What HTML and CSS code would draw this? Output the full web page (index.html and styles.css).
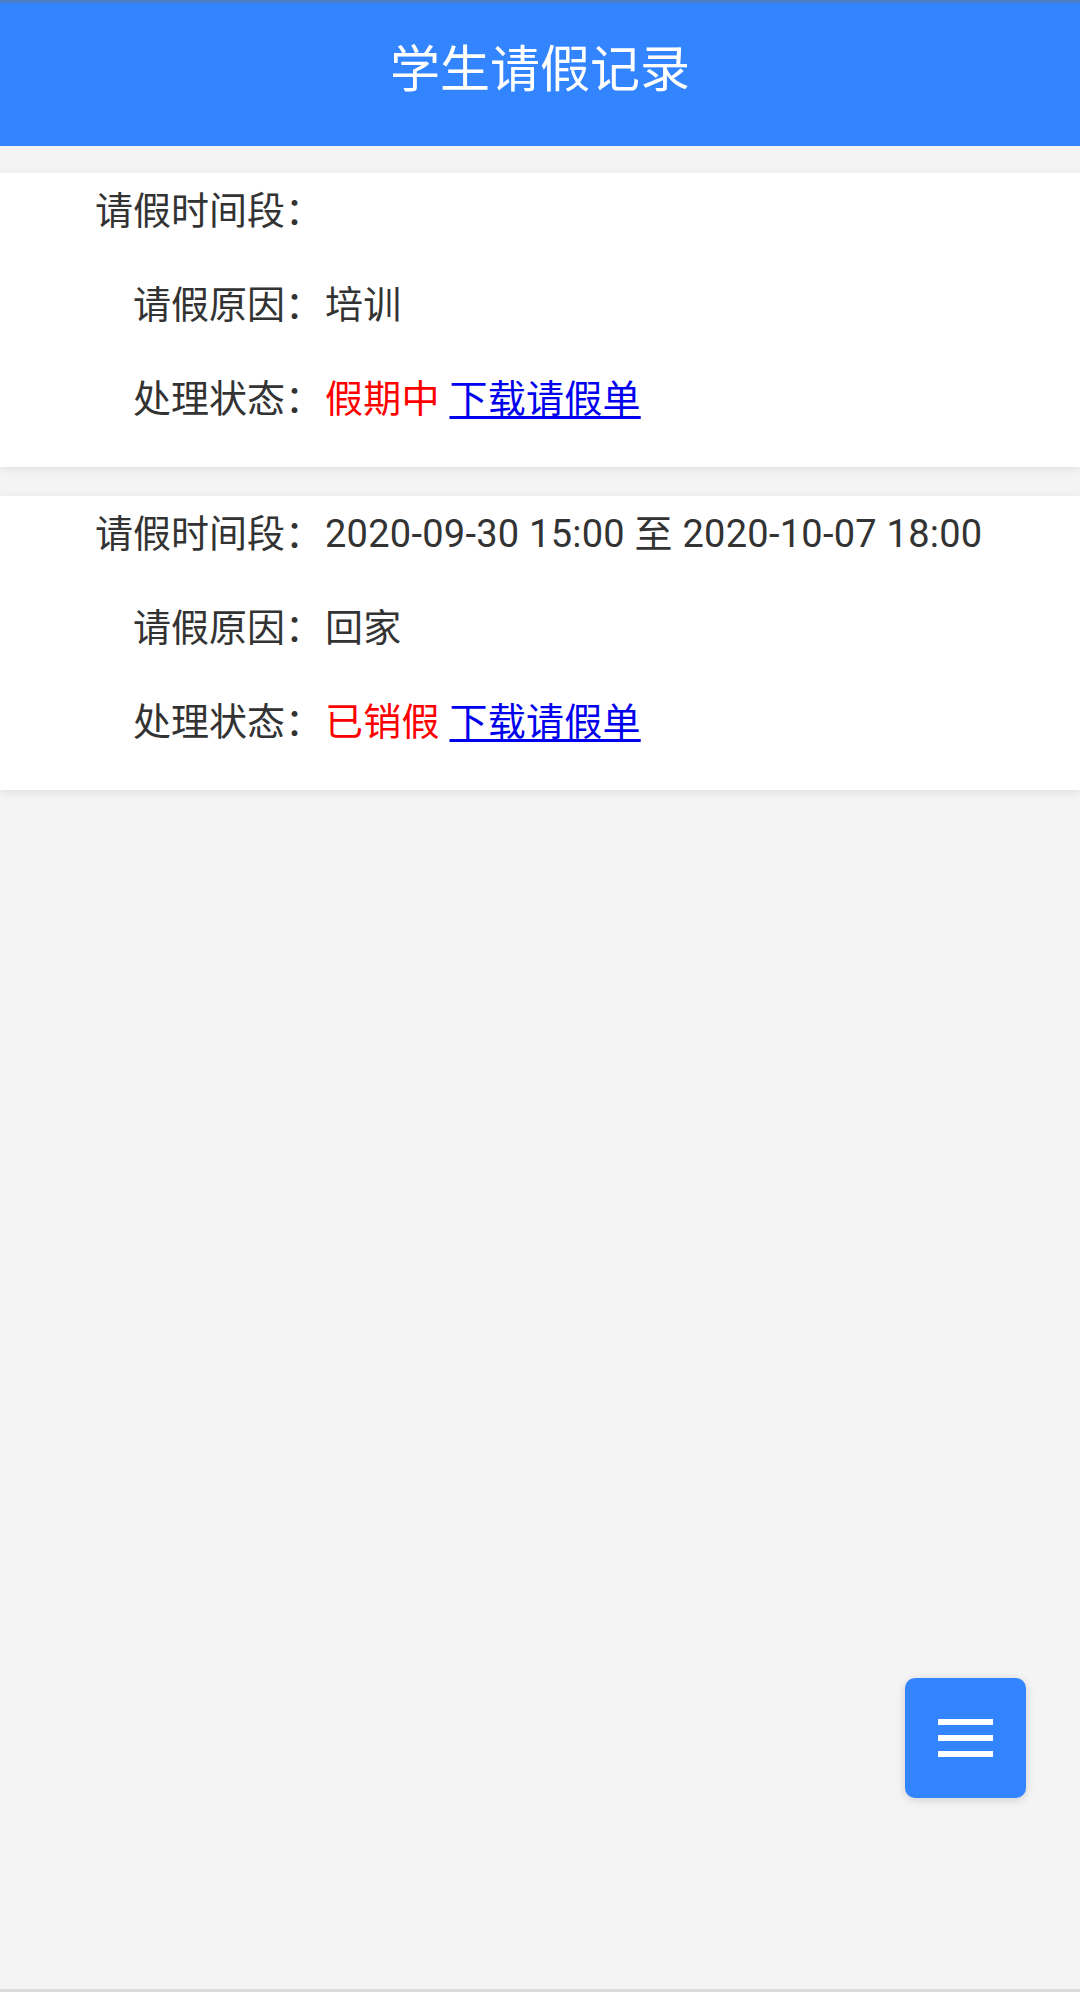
FILE: index.html
```html
<!DOCTYPE html>
<html lang="zh-CN">
<head>
<meta charset="utf-8">
<title>学生请假记录</title>
<link rel="stylesheet" href="styles.css">
</head>
<body>
<header class="topbar">
  <h1 class="title">学生请假记录</h1>
</header>
<main class="list">
  <section class="card">
    <div class="row"><span class="label">请假时间段：</span><span class="value"></span></div>
    <div class="row"><span class="label">请假原因：</span><span class="value">培训</span></div>
    <div class="row"><span class="label">处理状态：</span><span class="value"><span class="status">假期中</span> <a class="link" href="#">下载请假单</a></span></div>
  </section>
  <section class="card">
    <div class="row"><span class="label">请假时间段：</span><span class="value">2020-09-30 15:00 至 2020-10-07 18:00</span></div>
    <div class="row"><span class="label">请假原因：</span><span class="value">回家</span></div>
    <div class="row"><span class="label">处理状态：</span><span class="value"><span class="status">已销假</span> <a class="link" href="#">下载请假单</a></span></div>
  </section>
</main>
<button class="fab" type="button" aria-label="菜单">
  <span class="bar"></span><span class="bar"></span><span class="bar"></span>
</button>
<div class="bottom-line"></div>
</body>
</html>
```
FILE: styles.css
```css
html, body {
  margin: 0;
  padding: 0;
}
body {
  background: #f4f4f4;
  font-family: Roboto, "Noto Sans CJK SC", "Noto Sans", sans-serif;
  color: #333;
  width: 1080px;
  min-height: 1992px;
  position: relative;
}
.topbar {
  background: #3385ff;
  border-top: 3px solid #4a7ec8;
  height: 143px;
  display: flex;
  align-items: flex-start;
  justify-content: center;
}
.title {
  margin: 0;
  padding-top: 37px;
  font-size: 50px;
  font-weight: normal;
  line-height: 60px;
  color: #fff;
}
.list {
  padding-top: 27px;
  display: flex;
  flex-direction: column;
  gap: 29px;
}
.card {
  background: #fff;
  box-shadow: 0 2px 8px rgba(0, 0, 0, 0.09);
  padding: 10px 0 40px;
  display: flex;
  flex-direction: column;
  gap: 38px;
}
.row {
  display: flex;
  font-size: 38px;
  line-height: 56px;
  height: 56px;
  white-space: nowrap;
}
.label {
  width: 323px;
  text-align: right;
  flex: none;
}
.value {
  padding-left: 2px;
  letter-spacing: 0.25px;
}
.status {
  color: #f00;
}
.link {
  color: #0000ee;
  text-decoration: underline;
  text-underline-offset: 4px;
}
.fab {
  position: absolute;
  left: 905px;
  top: 1678px;
  width: 121px;
  height: 120px;
  border: none;
  border-radius: 10px;
  background: #3385ff;
  box-shadow: 0 2px 10px rgba(0, 0, 0, 0.15);
  padding: 0;
  display: flex;
  flex-direction: column;
  align-items: center;
  justify-content: center;
  gap: 10px;
}
.bar {
  display: block;
  width: 55px;
  height: 6px;
  background: #fff;
}
.bottom-line {
  position: absolute;
  left: 0;
  right: 0;
  top: 1989px;
  height: 3px;
  background: #dcdcdc;
}
```
